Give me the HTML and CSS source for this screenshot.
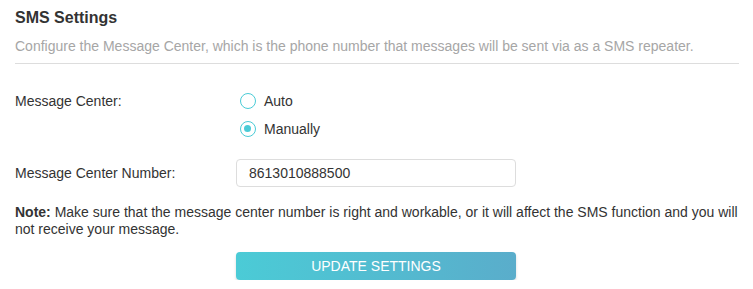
FILE: index.html
```html
<!DOCTYPE html>
<html lang="en">
  <head>
    <meta charset="UTF-8" />
    <meta name="viewport" content="width=device-width, initial-scale=1.0" />
    <title>SMS Settings</title>
    <link rel="stylesheet" href="styles.css">
  </head>
  <body>
    <div class="panel">
      <h2 class="title">SMS Settings</h2>
      <p class="desc">Configure the Message Center, which is the phone number that messages will be sent via as a SMS repeater.</p>

      <div class="row">
        <div class="label">Message Center:</div>
        <div class="field radios">
          <label class="radio"><span class="dot"></span>Auto</label>
          <label class="radio checked"><span class="dot"></span>Manually</label>
        </div>
      </div>

      <div class="row row-input">
        <div class="label">Message Center Number:</div>
        <div class="field">
          <input class="text-input" type="text" value="8613010888500">
        </div>
      </div>

      <p class="note"><b>Note:</b> Make sure that the message center number is right and workable, or it will affect the SMS function and you will not receive your message.</p>

      <div class="actions">
        <button class="btn">UPDATE SETTINGS</button>
      </div>
    </div>
  </body>
</html>
```

FILE: styles.css
```css
body {
  margin: 0;
  font-family: "Liberation Sans", Arial, sans-serif;
  font-size: 14px;
  color: #333;
  background-color: #fff;
}

.panel {
  padding: 8px 15px 0 15px;
  width: 724px;
}

.title {
  margin: 0;
  font-size: 16px;
  font-weight: bold;
  line-height: 20px;
  color: #333;
}

.desc {
  margin: 9px 0 0 0;
  padding-bottom: 8px;
  border-bottom: 1px solid #ddd;
  font-size: 14px;
  line-height: 18px;
  color: #a6a6a6;
}

.row {
  display: flex;
  margin-top: 27px;
}

.label {
  width: 221px;
  line-height: 20px;
}

.radios {
  display: flex;
  flex-direction: column;
  gap: 8px;
}

.radio {
  display: flex;
  align-items: center;
  line-height: 20px;
  cursor: pointer;
}

.dot {
  width: 16px;
  height: 16px;
  border: 1.5px solid #4acbd6;
  border-radius: 50%;
  margin: 0 8px 0 4px;
  position: relative;
  box-sizing: border-box;
}

.radio.checked .dot::after {
  content: "";
  position: absolute;
  left: 3px;
  top: 3px;
  width: 7px;
  height: 7px;
  border-radius: 50%;
  background-color: #4acbd6;
}

.row-input {
  margin-top: 20px;
  align-items: center;
}

.text-input {
  width: 280px;
  height: 28px;
  box-sizing: border-box;
  border: 1px solid #ddd;
  border-radius: 4px;
  padding: 0 12px;
  font-family: "Liberation Sans", Arial, sans-serif;
  font-size: 14px;
  color: #333;
  outline: none;
}

.note {
  margin: 17px 0 0 0;
  line-height: 17px;
  font-size: 14px;
}

.actions {
  padding-left: 221px;
  margin-top: 14px;
}

.btn {
  width: 280px;
  height: 28px;
  border: none;
  border-radius: 4px;
  background: linear-gradient(to right, #4bcbd6, #5aadcb);
  color: #fff;
  font-family: "Liberation Sans", Arial, sans-serif;
  font-size: 14px;
  box-shadow: 0 2px 3px rgba(0, 0, 0, 0.15);
  cursor: pointer;
}
```
